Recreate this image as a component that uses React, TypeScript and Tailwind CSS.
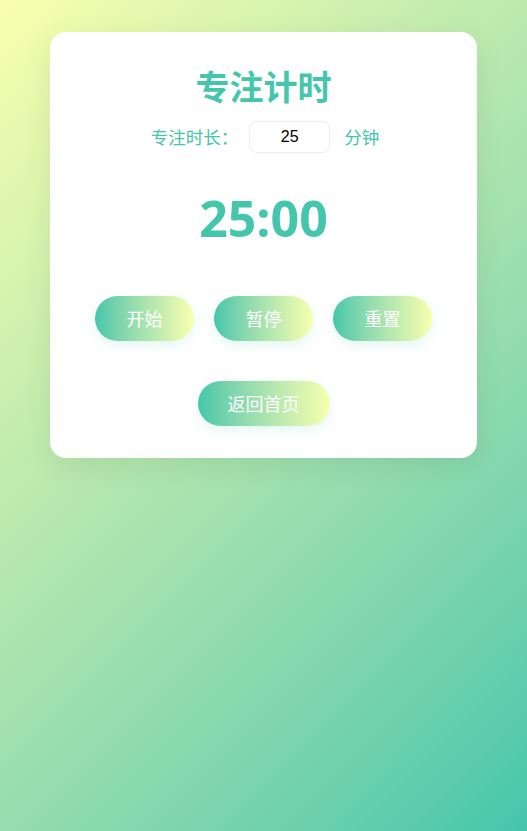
const font = { fontFamily: '"Noto Sans CJK SC", sans-serif' };

const GradientButton = ({ label, className }: { label: string; className: string }) => (
  <button
    className={
      "h-[45px] rounded-full bg-linear-to-r from-[#43c6ac] to-[#f8ffae] text-[18px] text-white shadow-[0_4px_12px_rgba(67,198,172,0.15)] " +
      className
    }
  >
    {label}
  </button>
);

export default function App() {
  return (
    <div
      className="min-h-[831px] w-full bg-linear-135 from-[#f8ffae] to-[#43c6ac] pt-8"
      style={font}
    >
      <div className="mx-auto flex w-[427px] flex-col items-center rounded-2xl bg-white pt-[34px] pb-8 shadow-[0_8px_30px_rgba(0,0,0,0.08)]">
        <h1 className="h-10 text-[34px] leading-10 font-bold text-[#43c6ac]">专注计时</h1>

        <div className="mt-[15px] ml-[3px] flex items-center text-[17.5px] text-[#43c6ac]">
          <span>专注时长：</span>
          <input
            defaultValue="25"
            className="mr-[14px] ml-[11px] h-8 w-[81px] rounded-lg border border-[#eeeeee] text-center text-[16px] text-black outline-none"
            style={{ fontFamily: '"Liberation Sans", sans-serif' }}
          />
          <span>分钟</span>
        </div>

        <div
          className="mt-[35px] h-[60px] text-[50px] leading-[60px] font-bold text-[#43c6ac]"
          style={{ fontFamily: '"Open Sans", sans-serif' }}
        >
          25:00
        </div>

        <div className="mt-[48px] flex gap-5">
          <GradientButton label="开始" className="w-[99px]" />
          <GradientButton label="暂停" className="w-[99px]" />
          <GradientButton label="重置" className="w-[99px]" />
        </div>

        <GradientButton label="返回首页" className="mt-10 w-[132px]" />
      </div>
    </div>
  );
}
